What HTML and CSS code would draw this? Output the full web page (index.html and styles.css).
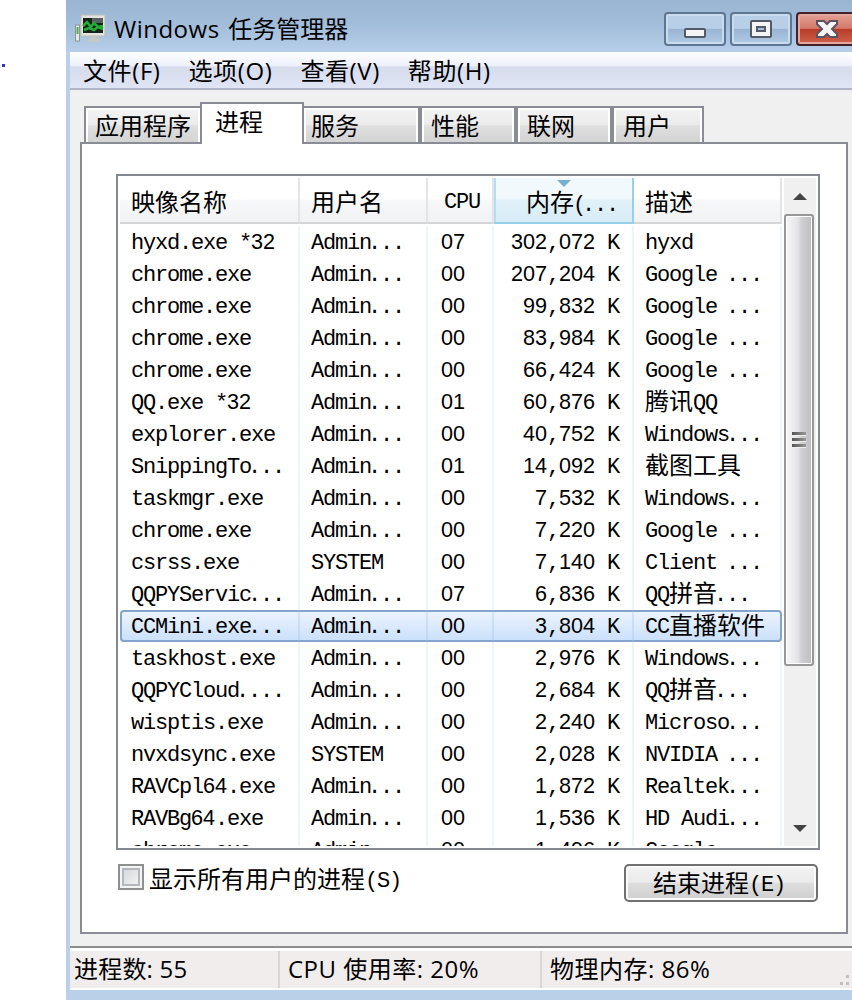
FILE: index.html
```
<!DOCTYPE html>
<html lang="zh-CN">
<head>
  <meta charset="UTF-8">
  <title>Windows 任务管理器</title>
  <link rel="stylesheet" href="styles.css">
</head>
<body>

  <div class="desktop-dot"></div>

  <div class="window">
    <!-- Title Bar -->
    <div class="titlebar">
      <svg class="app-icon" width="34" height="30" viewBox="0 0 34 30">
        <rect x="1.5" y="11" width="4" height="16" fill="#e6e9e2" stroke="#8d9590"/>
        <path d="M3.5 13v7" stroke="#4fb053" stroke-width="2"/>
        <path d="M16 22h8v3h2v3H14v-3h2z" fill="#c4c8c6"/>
        <rect x="7" y="1" width="24" height="21" fill="#e4e3df" stroke="#b9bdb9"/>
        <rect x="9" y="4" width="20" height="15" fill="#14241b"/>
        <path d="M18 4h11v5H18z" fill="#596064"/>
        <path d="M9 12l4-4 4 5 3-4 4 4 5-1M10 16l5-2 5 2 4-3 5 2" fill="none" stroke="#24ae37" stroke-width="2.5"/>
      </svg>
      <div class="title"><span class="latin">Windows </span>任务管理器</div>
      <div class="window-buttons">
        <div class="win-btn">
          <svg width="24" height="20" viewBox="0 0 24 20"><rect x="2" y="10" width="20" height="8" rx="1" fill="#f4f4f4" stroke="#535b6b" stroke-width="2"/></svg>
        </div>
        <div class="win-btn">
          <svg width="24" height="20" viewBox="0 0 24 20"><rect x="2" y="2" width="20" height="16" rx="1" fill="#f4f4f4" stroke="#535b6b" stroke-width="2"/><rect x="8" y="8" width="8" height="4" fill="#a7c0dc" stroke="#535b6b" stroke-width="2"/></svg>
        </div>
        <div class="win-btn close">
          <svg width="24" height="20" viewBox="0 0 24 20"><path d="M2 2h7l3 3 3-3h7v3l-5 5 5 5v3h-7l-3-3-3 3H2v-3l5-5-5-5z" fill="#f6f6f6" stroke="#5c5360" stroke-width="2"/></svg>
        </div>
      </div>
    </div>

    <!-- Menu -->
    <div class="menu">
      <a>文件(F)</a>
      <a>选项(O)</a>
      <a>查看(V)</a>
      <a>帮助(H)</a>
    </div>

    <!-- Tabs -->
    <div class="content">
      <div class="tabs">
        <div class="tab tab-apps">应用程序</div>
        <div class="tab active">进程</div>
        <div class="tab tab-services">服务</div>
        <div class="tab">性能</div>
        <div class="tab">联网</div>
        <div class="tab tab-users">用户</div>
      </div>

      <div class="panel">
        <div class="list">
          <div class="table">
            <div class="row header">
              <div>映像名称</div>
              <div>用户名</div>
              <div class="mono cpu-head">CPU</div>
              <div class="sorted">内存<span class="mono paren">(</span><span class="mono dots">...</span></div>
              <div>描述</div>
            </div>
            <div class="rows" id="rows"></div>
          </div>
          <div class="scrollbar">
            <div class="arrow up"></div>
            <div class="thumb"><i></i><i></i><i></i></div>
            <div class="arrow down"></div>
          </div>
        </div>

        <div class="actions">
          <label class="show-all"><span class="checkbox"></span><span>显示所有用户的进程<span class="mono">(S)</span></span></label>
          <div class="end-button">结束进程<span class="mono">(E)</span></div>
        </div>
      </div>
    </div>

    <!-- Status Bar -->
    <div class="statusbar">
      <div class="status count">进程数: 55</div>
      <div class="status cpu">CPU 使用率: 20%</div>
      <div class="status">物理内存: 86%</div>
      <svg class="grip" width="10" height="12" viewBox="0 0 10 12"><path d="M6 0h3v3H6zM0 7h3v3H0zM6 7h3v3H6z" fill="#c3bebe"/></svg>
    </div>
  </div>

  <script>
    var processes = [
      ["hyxd.exe *32", "Admin...", "07", "302,072 K", "hyxd"],
      ["chrome.exe", "Admin...", "00", "207,204 K", "Google ..."],
      ["chrome.exe", "Admin...", "00", "99,832 K", "Google ..."],
      ["chrome.exe", "Admin...", "00", "83,984 K", "Google ..."],
      ["chrome.exe", "Admin...", "00", "66,424 K", "Google ..."],
      ["QQ.exe *32", "Admin...", "01", "60,876 K", "腾讯QQ"],
      ["explorer.exe", "Admin...", "00", "40,752 K", "Windows..."],
      ["SnippingTo...", "Admin...", "01", "14,092 K", "截图工具"],
      ["taskmgr.exe", "Admin...", "00", "7,532 K", "Windows..."],
      ["chrome.exe", "Admin...", "00", "7,220 K", "Google ..."],
      ["csrss.exe", "SYSTEM", "00", "7,140 K", "Client ..."],
      ["QQPYServic...", "Admin...", "07", "6,836 K", "QQ拼音..."],
      ["CCMini.exe...", "Admin...", "00", "3,804 K", "CC直播软件"],
      ["taskhost.exe", "Admin...", "00", "2,976 K", "Windows..."],
      ["QQPYCloud....", "Admin...", "00", "2,684 K", "QQ拼音..."],
      ["wisptis.exe", "Admin...", "00", "2,240 K", "Microso..."],
      ["nvxdsync.exe", "SYSTEM", "00", "2,028 K", "NVIDIA ..."],
      ["RAVCpl64.exe", "Admin...", "00", "1,872 K", "Realtek..."],
      ["RAVBg64.exe", "Admin...", "00", "1,536 K", "HD Audi..."],
      ["chrome.exe", "Admin...", "00", "1,496 K", "Google ..."]
    ];
    var selected = 12;

    // Digits, Chinese text and trailing dots get their own spacing
    function format(text) {
      return text
        .replace(/\d+/g, '<span class="num">$&</span>')
        .replace(/[\u4e00-\u9fff]+/g, '<span class="cn">$&</span>')
        .replace(/\.{3,}$/, '<span class="dots">$&</span>');
    }

    document.getElementById("rows").innerHTML = processes.map(function(p, i) {
      return '<div class="row' + (i == selected ? ' selected' : '') + '">' +
        p.map(function(cell) { return '<div>' + format(cell) + '</div>'; }).join('') +
        '</div>';
    }).join('');
  </script>

</body>
</html>
```
FILE: styles.css
```
/* Basic Styles */
* {
  box-sizing: border-box;
}

body {
  margin: 0;
  height: 1000px;
  overflow: hidden;
  background: #fff;
  color: #000;
  font-family: "Noto Sans CJK SC", sans-serif;
  font-size: 24px;
  position: relative;
}

.desktop-dot {
  position: absolute;
  left: 2px;
  top: 64px;
  width: 3px;
  height: 3px;
  background: #3a30d0;
}

.window {
  margin-left: 66px;
  width: 800px;
  height: 1000px;
  padding: 0 0 10px 4px;
  background: #b9d0e8;
  display: flex;
  flex-direction: column;
}

.mono,
.rows {
  font-family: "Liberation Mono", monospace;
  font-size: 22px;
  letter-spacing: -1.2px;
}

span.mono {
  line-height: 0;
}

.num {
  font-family: "Liberation Sans", sans-serif;
  font-size: 21.6px;
  letter-spacing: 0;
  line-height: 0;
}

.cn {
  font-family: "Noto Sans CJK SC", sans-serif;
  font-size: 24px;
  letter-spacing: 0;
  line-height: 0;
  vertical-align: -1px;
}

.dots {
  margin-left: -3px;
}

.paren {
  margin-left: -1px;
}

.actions .mono {
  vertical-align: 1px;
}

/* Title Bar */
.titlebar {
  height: 52px;
  flex: none;
  margin-left: -4px;
  padding-left: 8px;
  display: flex;
  background: linear-gradient(#9ab5d1, #a3bedb 50%, #b6cee8);
}

.app-icon {
  margin-top: 14px;
}

.title {
  margin: 9px 0 0 6px;
  width: 550px;
  line-height: 40px;
  white-space: nowrap;
  font-family: "Open Sans", "Noto Sans CJK SC", sans-serif;
}

.latin {
  letter-spacing: 0.5px;
  word-spacing: 2px;
}

.window-buttons {
  display: flex;
  gap: 4px;
  margin-top: 12px;
}

.win-btn {
  width: 62px;
  height: 34px;
  border: 2px solid #5f7692;
  border-radius: 4px;
  box-shadow: inset 0 0 0 2px #c8dbef;
  background: linear-gradient(#b8cfe8 48%, #98b4d2 50%, #b2cbe6);
  display: flex;
  align-items: center;
  justify-content: center;
}

.win-btn.close {
  border-color: #43202a;
  box-shadow: inset 0 0 0 2px #e5a79d;
  background: linear-gradient(#e2a195, #d5796a 48%, #b83c28 50%, #cf624c);
}

/* Menu */
.menu {
  height: 38px;
  flex: none;
  display: flex;
  padding-left: 13px;
  gap: 28px;
  line-height: 38px;
  letter-spacing: 0.6px;
  font-family: "Open Sans", "Noto Sans CJK SC", sans-serif;
  border-bottom: 2px solid #b0b4c4;
  background: linear-gradient(#fff, #edf0fb 38%, #d6dcec 42%, #dfe5f5);
}

/* Tabs */
.content {
  height: 856px;
  flex: none;
  padding: 12px 0 0 10px;
  background: #f0f0f0;
}

.tabs {
  height: 40px;
  padding-left: 4px;
  display: flex;
  align-items: flex-end;
}

.tab {
  width: 96px;
  height: 36px;
  padding-left: 9px;
  line-height: 33px;
  border: 2px solid #898c95;
  border-width: 2px 2px 0 2px;
  box-shadow: inset 2px 2px #fff, inset -2px 0 #fff;
  background: linear-gradient(#f3f3f3, #ebebeb 50%, #dfdfdf 52%, #d3d3d3);
}

.tab-apps {
  width: 116px;
  border-right: 0;
}

.tab-services {
  width: 116px;
  padding-left: 7px;
  border-left: 0;
}

.tab-users {
  width: 92px;
}

.tab.active {
  width: 104px;
  height: 42px;
  margin-bottom: -2px;
  padding-left: 13px;
  line-height: 34px;
  background: #fff;
  position: relative;
}

.panel {
  width: 768px;
  height: 792px;
  padding: 30px 26px 0 34px;
  border: 2px solid #898c95;
  background: #fff;
}

/* Process List */
.list {
  width: 704px;
  height: 676px;
  padding: 2px;
  border: 2px solid #828790;
  display: flex;
  overflow: hidden;
}

.table {
  width: 662px;
  overflow: hidden;
}

.row {
  display: grid;
  grid-template-columns: 180px 128px 66px 140px 148px;
  height: 32px;
  line-height: 36px;
  white-space: pre;
}

.row > div {
  height: 32px;
  padding-left: 11px;
  border-right: 2px solid #edf4fa;
}

.rows {
  height: 622px;
  overflow: hidden;
  padding-top: 2px;
}

.rows .row > div:nth-child(3) {
  padding-left: 13px;
}

.rows .row > div:nth-child(4) {
  padding: 0 13px 0 0;
  text-align: right;
}

.row.header {
  height: 46px;
}

.row.header > div {
  height: 46px;
  line-height: 45px;
  border-right-color: #e2e4e8;
  border-bottom: 2px solid #d5d5d5;
  background: linear-gradient(#fff 48%, #f7f8fa 50%, #f1f2f4);
}

.row.header .cpu-head {
  padding-left: 16px;
  line-height: 49px;
}

.row.header .sorted {
  padding-left: 32px;
  border-right-color: #96d0ea;
  border-bottom-color: #96d0ea;
  box-shadow: inset 2px 0 #b4dff2;
  background: linear-gradient(#f2f9fc 46%, #e1f1f9 50%, #d8ecf6);
  position: relative;
}

.sorted::before {
  content: "";
  position: absolute;
  left: 63px;
  top: 2px;
  border: 7px solid transparent;
  border-top-color: #77b0d0;
  border-bottom: 0;
}

.row.selected {
  border-radius: 4px;
  box-shadow: inset 0 0 0 2px #84a4cc;
  background: linear-gradient(#eef5ff, #c9dffb);
}

.row.selected > div {
  border-right-color: rgba(160, 190, 225, 0.3);
}

.row.selected > div:last-child {
  border-right-color: transparent;
}

/* Scrollbar */
.scrollbar {
  width: 32px;
  margin-left: 2px;
  display: flex;
  flex-direction: column;
  background: #f0f0f0;
}

.arrow {
  height: 36px;
  display: flex;
  justify-content: center;
  align-items: center;
}

.arrow::before {
  content: "";
  border: 7px solid transparent;
}

.up::before {
  border-bottom-color: #444;
  border-top: 0;
}

.down {
  margin-top: auto;
}

.down::before {
  border-top-color: #444;
  border-bottom: 0;
}

.thumb {
  width: 30px;
  height: 452px;
  border: 2px solid #979797;
  border-radius: 3px;
  box-shadow: inset 0 0 0 1px #fff;
  background: linear-gradient(90deg, #f6f6f6, #e5e5e7 45%, #cfcfd2 60%, #bfbfc3);
  display: flex;
  flex-direction: column;
  align-items: center;
  justify-content: center;
  gap: 2px;
}

.thumb i {
  width: 14px;
  height: 4px;
  background: linear-gradient(90deg, #555, #999);
  border-bottom: 1px solid #eee;
}

/* Bottom Controls */
.actions {
  display: flex;
  justify-content: space-between;
  padding: 14px 2px 0 2px;
}

.show-all {
  display: flex;
  line-height: 28px;
}

.checkbox {
  width: 26px;
  height: 26px;
  margin-right: 5px;
  border: 2px solid #8e8f8f;
  box-shadow: inset 0 0 0 2px #f4f4f4, inset 0 0 0 4px #b4b8bc;
  background: linear-gradient(135deg, #cfd2d6, #f8f8f8);
}

.end-button {
  width: 194px;
  height: 38px;
  padding-right: 4px;
  line-height: 31px;
  text-align: center;
  border: 2px solid #707070;
  border-radius: 5px;
  box-shadow: inset 0 0 0 2px #fafafa;
  background: linear-gradient(#f2f2f2, #ebebeb 48%, #dddddd 50%, #cfcfcf);
}

/* Status Bar */
.statusbar {
  height: 44px;
  flex: none;
  display: flex;
  padding-top: 3px;
  border-top: 2px solid #8d8d8d;
  border-bottom: 2px solid #fff;
  box-shadow: inset 0 3px #fff;
  background: #f1eded;
  letter-spacing: 0.5px;
  font-family: "Open Sans", "Noto Sans CJK SC", sans-serif;
}

.status {
  line-height: 36px;
  padding-left: 8px;
  white-space: nowrap;
}

.count {
  width: 210px;
  padding-left: 4px;
  letter-spacing: 0.2px;
  border-right: 2px solid #d9d6d6;
}

.cpu {
  width: 262px;
  border-right: 2px solid #d9d6d6;
}

.grip {
  margin: 24px 0 0 130px;
}
```
